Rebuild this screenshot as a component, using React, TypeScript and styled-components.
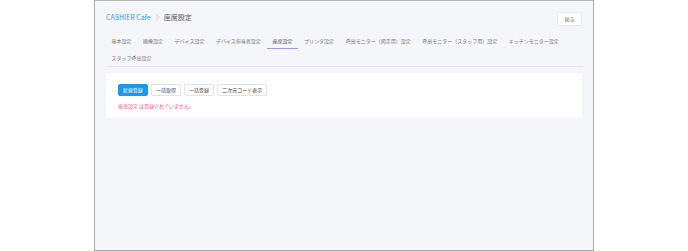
import React from "react";
import styled, { createGlobalStyle } from "styled-components";

const Global = createGlobalStyle`
  html, body { margin: 0; padding: 0; background: #ffffff; }
  body { font-family: "Noto Sans CJK JP", "Noto Sans", sans-serif; }
  * { box-sizing: border-box; }
`;

const Page = styled.div`
  width: 688px;
  height: 251px;
  display: flex;
  justify-content: center;
`;

const Frame = styled.div`
  width: 500px;
  height: 251px;
  border: 1px solid #a9a9a9;
  border-top-color: #b5b5b5;
  background: #f5f6fa;
  padding: 0 10px 0 11px;
  display: flex;
  flex-direction: column;
`;

const Header = styled.div`
  display: flex;
  justify-content: space-between;
  align-items: flex-start;
  padding-top: 10px;
  padding-right: 1px;
`;

const Title = styled.div`
  display: flex;
  align-items: center;
  gap: 4px;
  font-size: 7px;
  line-height: 12px;
  color: #555;
`;

const Brand = styled.span`
  color: #2d9cf0;
`;

const Current = styled.span`
  color: #555;
`;

const BackButton = styled.button`
  margin-top: 1px;
  width: 25px;
  height: 14px;
  padding: 0;
  border: 1px solid #e9ebf0;
  border-radius: 2px;
  background: #fff;
  color: #666;
  font-family: inherit;
  font-size: 5px;
  line-height: 12px;
`;

const Tabs = styled.div`
  margin-top: 5.5px;
  display: flex;
  flex-wrap: wrap;
  column-gap: 0.8px;
  border-bottom: 1px solid #e7e9ef;
  padding-right: 10px;
`;

const Tab = styled.div<{ $active?: boolean }>`
  height: 17.2px;
  padding: 0 5.4px;
  font-size: 5px;
  line-height: 17px;
  white-space: nowrap;
  color: ${(p) => (p.$active ? "#4a4a4a" : "#747474")};
  border-bottom: 1px solid ${(p) => (p.$active ? "#a597ea" : "transparent")};
`;

const Card = styled.div`
  margin-top: 6.5px;
  margin-right: 1px;
  background: #fff;
  border-radius: 2px;
  padding: 10.5px 12px 8px;
`;

const ButtonRow = styled.div`
  display: flex;
  gap: 3.5px;
`;

const Button = styled.button<{ $primary?: boolean }>`
  height: 12.5px;
  padding: 0 3.8px;
  border-radius: 2px;
  border: 1px solid ${(p) => (p.$primary ? "#1a98ee" : "#dfe4ee")};
  background: ${(p) => (p.$primary ? "#1a98ee" : "#fff")};
  color: ${(p) => (p.$primary ? "#fff" : "#444")};
  font-family: inherit;
  font-size: 5px;
  line-height: 10px;
  white-space: nowrap;
`;

const ErrorText = styled.div`
  margin-top: 5px;
  font-size: 5px;
  line-height: 9px;
  color: #f2558c;
`;

const Chevron = () => (
  <svg width="5" height="8" viewBox="0 0 5 8" fill="none">
    <path d="M1 0.8 L4 4 L1 7.2" stroke="#c2c2c2" strokeWidth="0.7" />
  </svg>
);

const tabsList = [
  "基本設定",
  "画像設定",
  "デバイス設定",
  "デバイス担当者設定",
  "座席設定",
  "プリンタ設定",
  "呼出モニター（掲示用）設定",
  "呼出モニター（スタッフ用）設定",
  "キッチンモニター設定",
  "スタッフ呼出設定",
];

export default function App() {
  return (
    <>
      <Global />
      <Page>
        <Frame>
          <Header>
            <Title>
              <Brand>CASHIER Cafe</Brand>
              <Chevron />
              <Current>座席設定</Current>
            </Title>
            <BackButton>戻る</BackButton>
          </Header>
          <Tabs>
            {tabsList.map((t) => (
              <Tab key={t} $active={t === "座席設定"}>
                {t}
              </Tab>
            ))}
          </Tabs>
          <Card>
            <ButtonRow>
              <Button $primary>新規登録</Button>
              <Button>一括取得</Button>
              <Button>一括登録</Button>
              <Button>二次元コード表示</Button>
            </ButtonRow>
            <ErrorText>座席設定 は登録されていません。</ErrorText>
          </Card>
        </Frame>
      </Page>
    </>
  );
}
